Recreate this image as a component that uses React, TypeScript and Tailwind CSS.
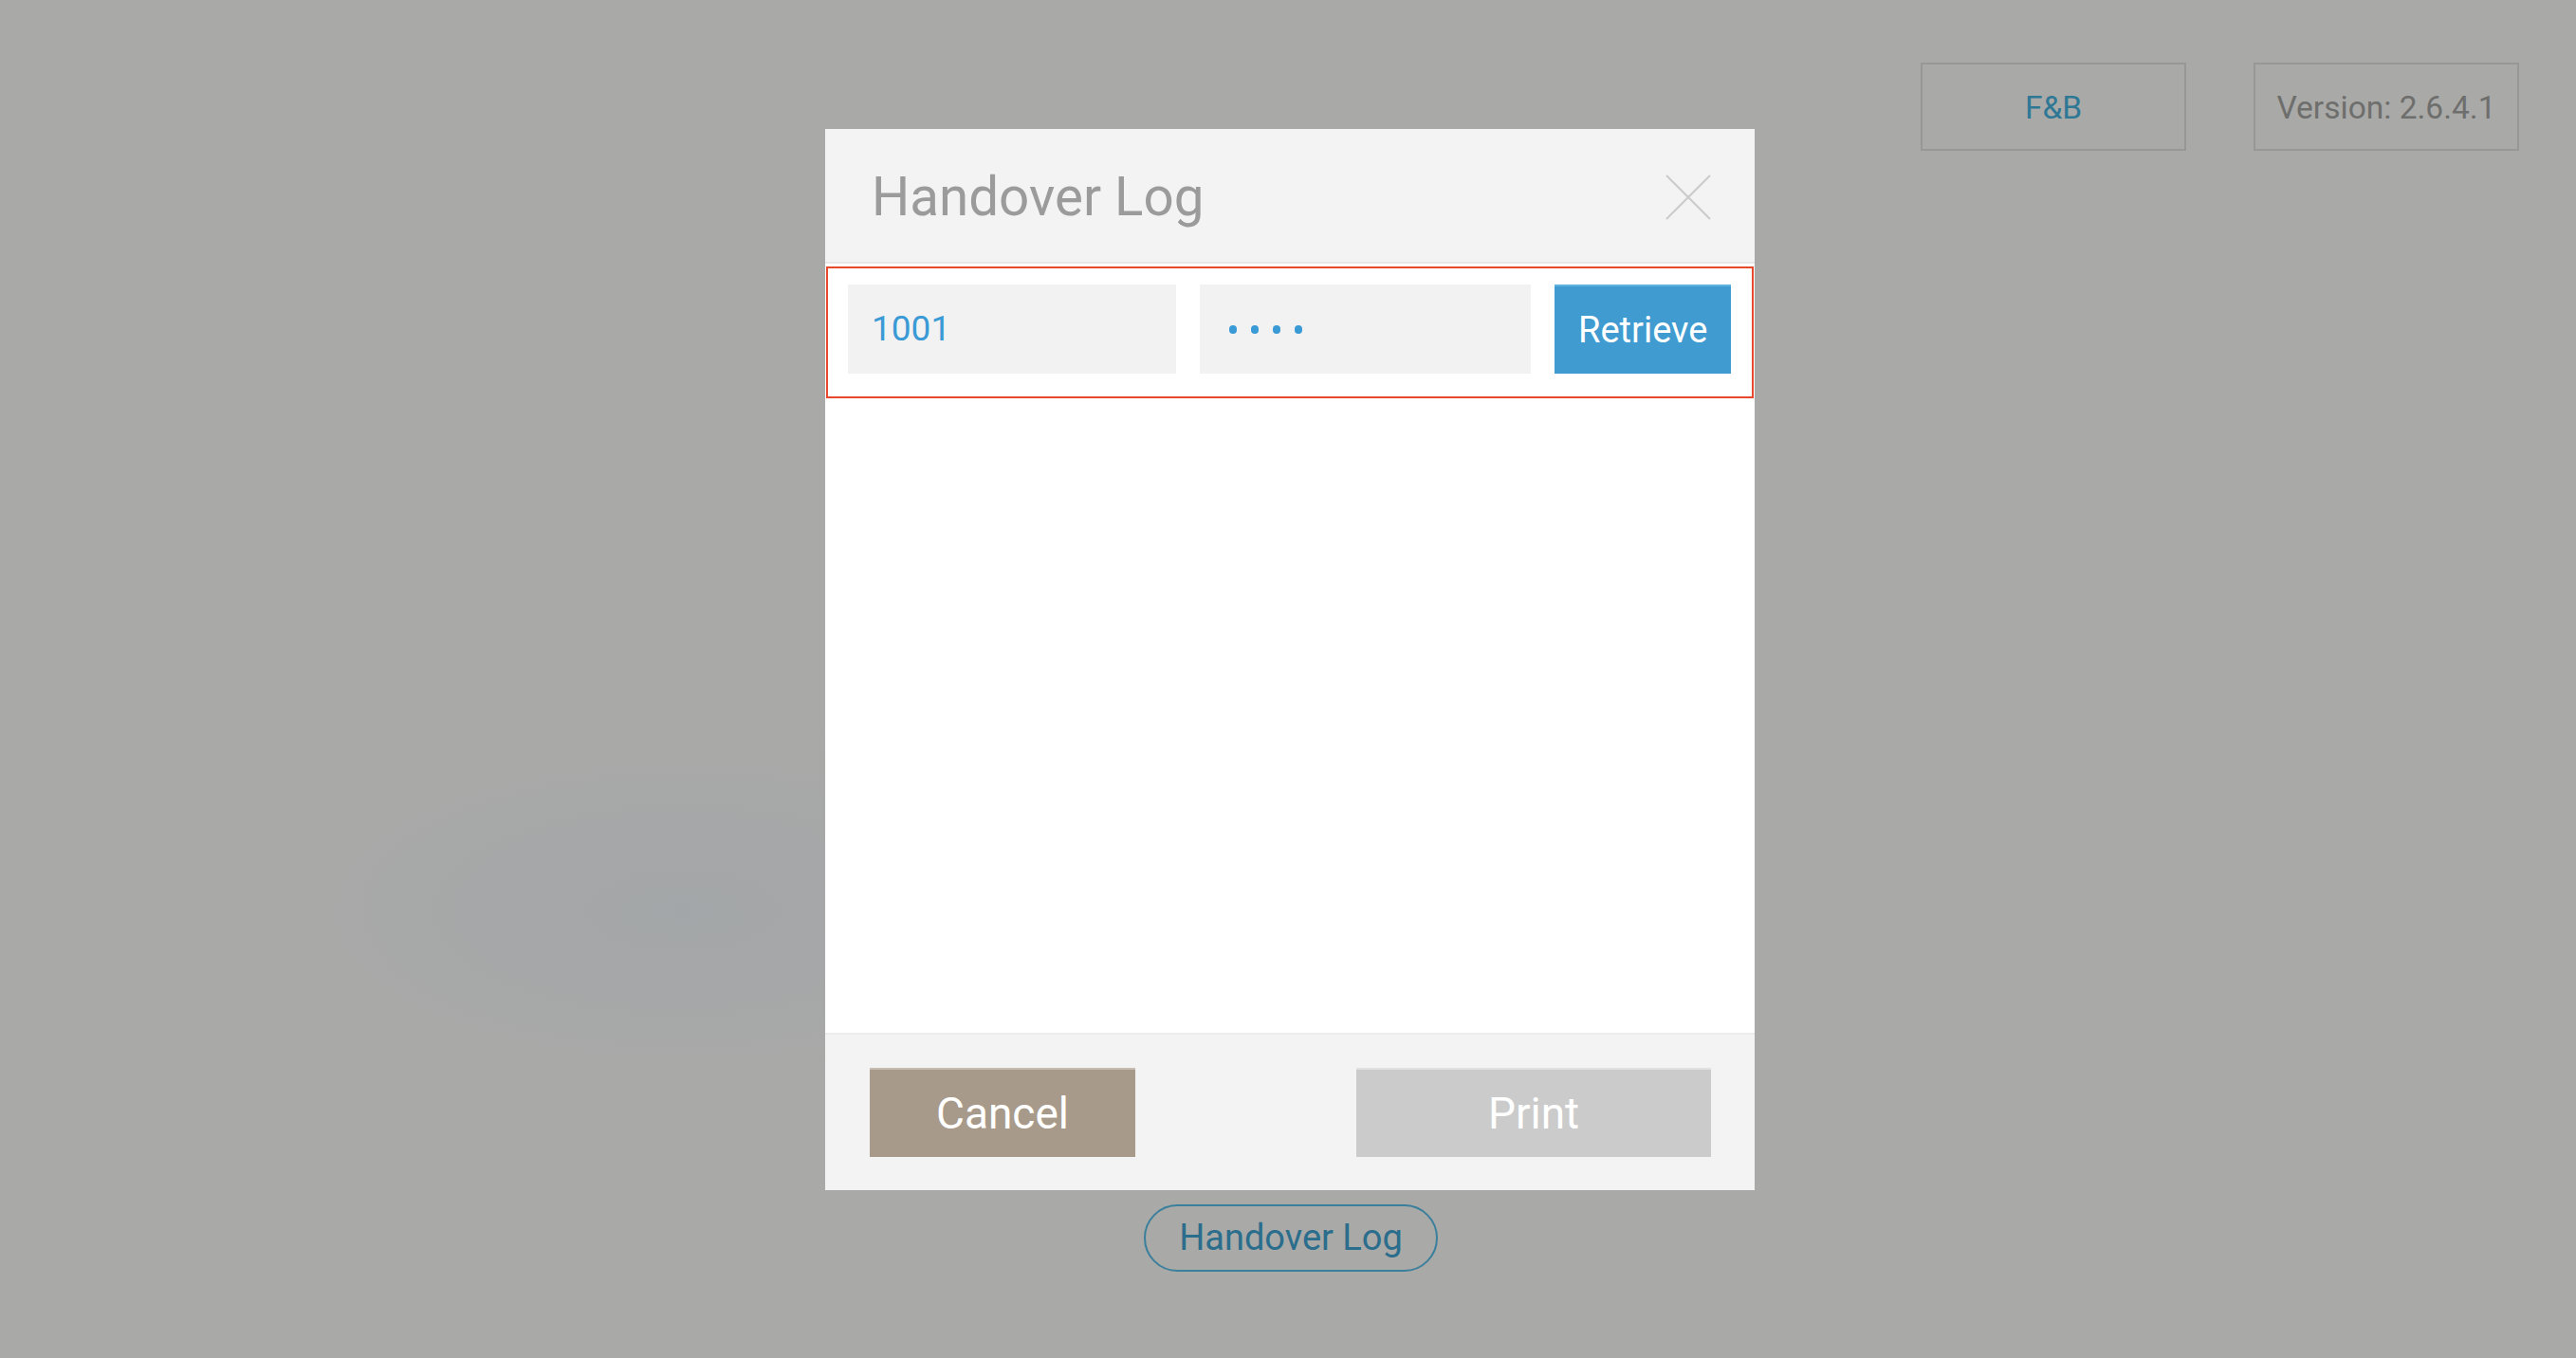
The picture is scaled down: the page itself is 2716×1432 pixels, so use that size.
const TopBox = ({ label, tone }: { label: string; tone: string }) => (
  <div className={`w-[280px] h-[93px] flex items-center justify-center pt-[4px] border-2 border-[#979795] text-[33.5px] ${tone}`}>
    {label}
  </div>
);

export default function App() {
  return (
    <div className="relative w-[2716px] h-[1432px] overflow-hidden bg-[#a9a9a7] bg-[radial-gradient(ellipse_520px_220px_at_720px_960px,#a3a6a8,#a7a8a8_55%,#a9a9a7_90%)] font-['Roboto','Liberation_Sans',sans-serif]">
      {/* background page, dimmed */}
      <div className="flex flex-col h-full">
        <div className="flex justify-end gap-[71px] pt-[66px] pr-[60px]">
          <TopBox label="F&B" tone="text-[#2e7896]" />
          <TopBox label="Version: 2.6.4.1" tone="text-[#6e6e6d]" />
        </div>
        <div className="flex-1" />
        <div className="flex justify-center pb-[91px] pl-[6px]">
          <button className="w-[310px] h-[71px] rounded-full border-2 border-[#3a7f9c] text-[38px] text-[#2a6d8c]">
            Handover Log
          </button>
        </div>
      </div>

      {/* dialog */}
      <div className="absolute inset-0 flex justify-center items-start pt-[136px] pl-[4px]">
        <div className="w-[980px] flex flex-col bg-white">
          <header className="h-[140px] bg-[#f3f3f3] flex items-center justify-between pl-[49px] pr-[46px] pt-[4px]">
            <h1 className="text-[56.5px] text-[#9b9b9b] font-normal">Handover Log</h1>
            <svg width="48" height="48" viewBox="0 0 48 48" className="text-[#cbcbcb]">
              <path d="M1 1 L47 47 M47 1 L1 47" stroke="currentColor" strokeWidth="2" fill="none" />
            </svg>
          </header>
          <div className="h-[2px] bg-[#e7e7e7]" />
          <div className="h-[3px]" />

          <div className="mx-[1px] border-2 border-[#e8482c] flex gap-[25px] pl-[21px] pr-[22px] pt-[17px] pb-[24px]">
            <div className="w-[347px] h-[94px] bg-[#f2f2f2] flex items-center pl-[25px] text-[37px] text-[#3a9ad6]">
              1001
            </div>
            <div className="w-[350px] h-[94px] bg-[#f2f2f2] flex items-center pl-[31px] gap-[15px]">
              {[0, 1, 2, 3].map(i => (
                <span key={i} className="w-[8px] h-[9px] rounded-full bg-[#3a9ad6]" />
              ))}
            </div>
            <button className="w-[186px] h-[94px] bg-[#3f9bd0] border-t-2 border-[#5fb3df] text-[38px] text-white">
              Retrieve
            </button>
          </div>

          <div className="h-[669px] bg-white" />

          <footer className="h-[166px] bg-[#f3f3f3] border-t-2 border-[#ececec] flex items-center justify-between pl-[47px] pr-[46px]">
            <button className="w-[280px] h-[94px] bg-[#a89a8a] border-t-2 border-[#c7bcb1] text-[46px] text-white">
              Cancel
            </button>
            <button className="w-[374px] h-[94px] bg-[#cbcbcb] border-t-2 border-[#e1e1e1] text-[46px] text-white">
              Print
            </button>
          </footer>
        </div>
      </div>
    </div>
  );
}
